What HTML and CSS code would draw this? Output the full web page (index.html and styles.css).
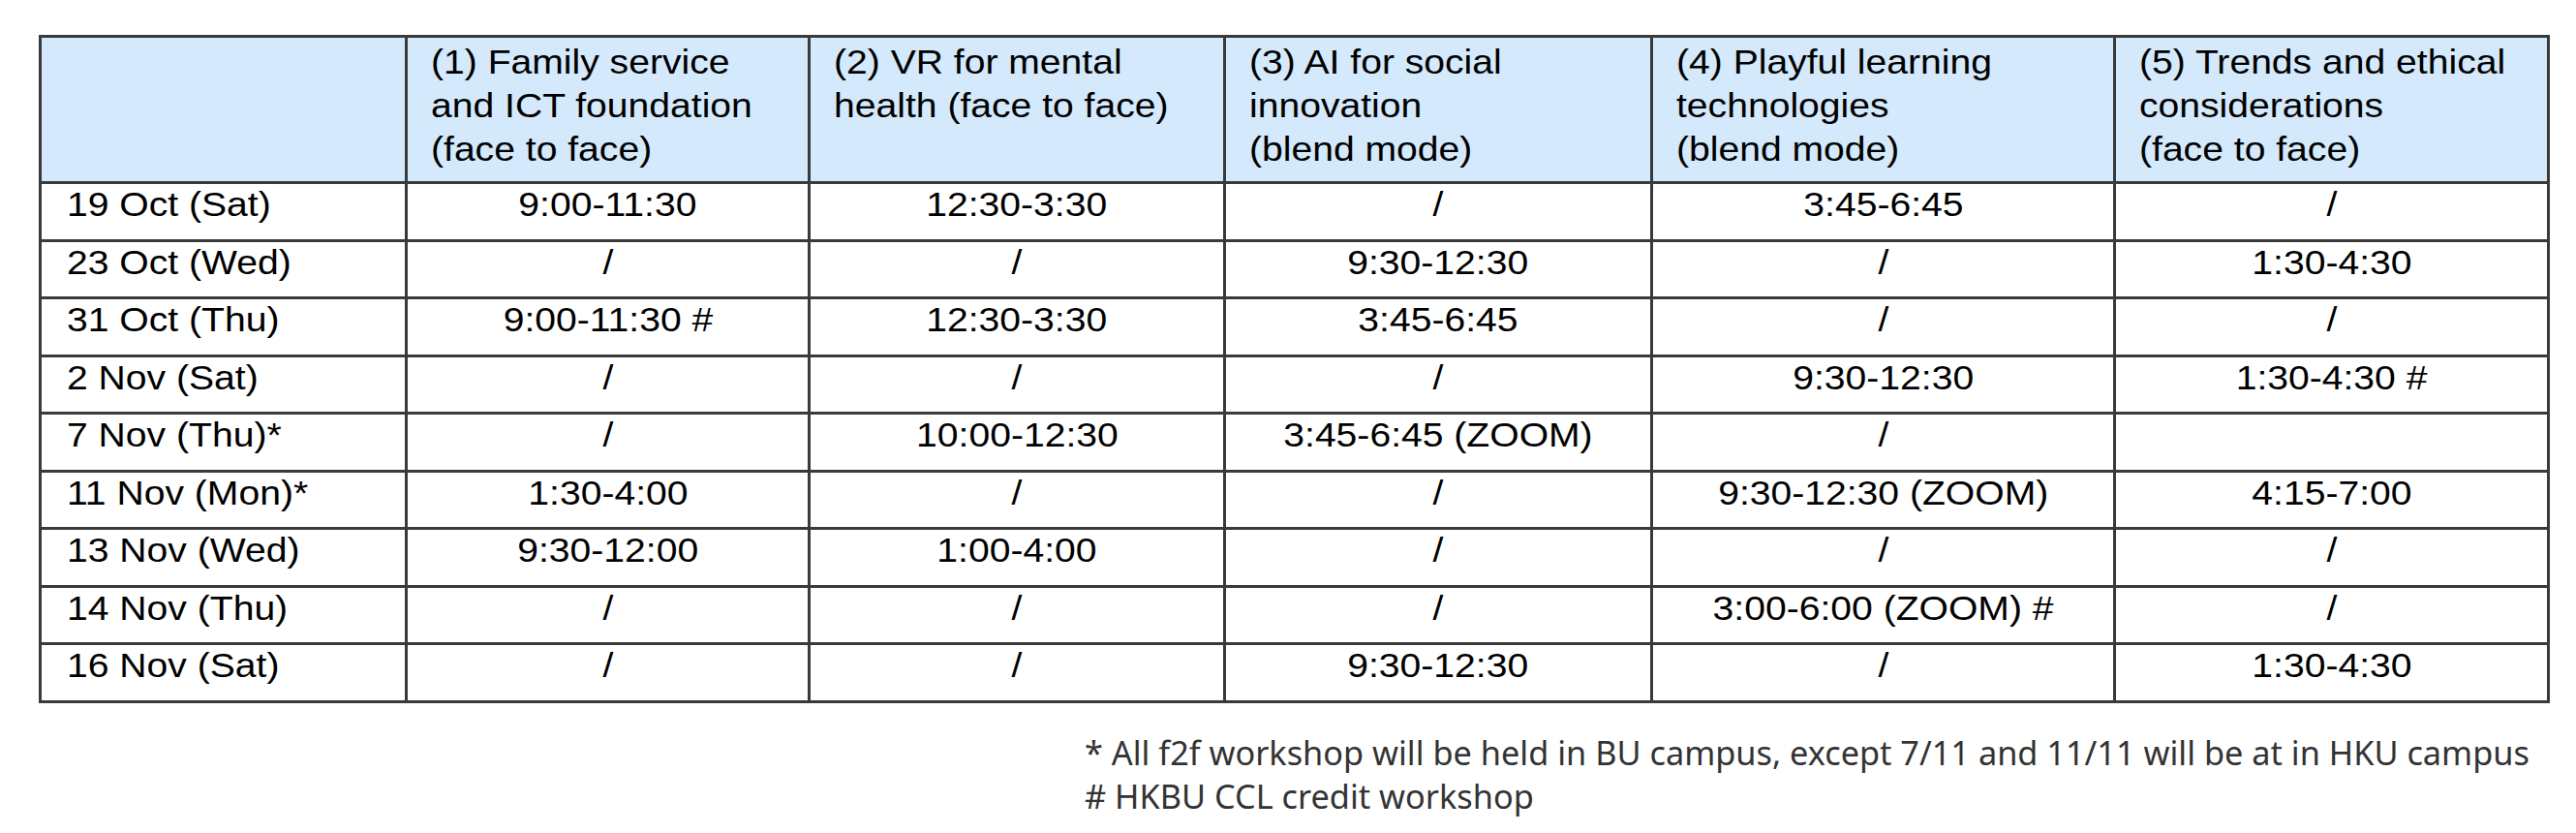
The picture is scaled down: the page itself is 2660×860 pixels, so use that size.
FILE: index.html
```html
<!DOCTYPE html>
<html lang="en">
<head>
<meta charset="utf-8">
<title>Workshop schedule</title>
<link rel="stylesheet" href="styles.css">
</head>
<body>
<main class="page">
  <div class="schedule" role="table">
    <div class="cell head"></div>
    <div class="cell head"><span class="sx">(1) Family service<br>and ICT foundation<br>(face to face)</span></div>
    <div class="cell head"><span class="sx">(2) VR for mental<br>health (face to face)</span></div>
    <div class="cell head"><span class="sx">(3) AI for social<br>innovation<br>(blend mode)</span></div>
    <div class="cell head"><span class="sx">(4) Playful learning<br>technologies<br>(blend mode)</span></div>
    <div class="cell head"><span class="sx">(5) Trends and ethical<br>considerations<br>(face to face)</span></div>

    <div class="cell date"><span class="sx">19 Oct (Sat)</span></div>
    <div class="cell time"><span class="sx">9:00-11:30</span></div>
    <div class="cell time"><span class="sx">12:30-3:30</span></div>
    <div class="cell time"><span class="sx">/</span></div>
    <div class="cell time"><span class="sx">3:45-6:45</span></div>
    <div class="cell time"><span class="sx">/</span></div>

    <div class="cell date"><span class="sx">23 Oct (Wed)</span></div>
    <div class="cell time"><span class="sx">/</span></div>
    <div class="cell time"><span class="sx">/</span></div>
    <div class="cell time"><span class="sx">9:30-12:30</span></div>
    <div class="cell time"><span class="sx">/</span></div>
    <div class="cell time"><span class="sx">1:30-4:30</span></div>

    <div class="cell date"><span class="sx">31 Oct (Thu)</span></div>
    <div class="cell time"><span class="sx">9:00-11:30 #</span></div>
    <div class="cell time"><span class="sx">12:30-3:30</span></div>
    <div class="cell time"><span class="sx">3:45-6:45</span></div>
    <div class="cell time"><span class="sx">/</span></div>
    <div class="cell time"><span class="sx">/</span></div>

    <div class="cell date"><span class="sx">2 Nov (Sat)</span></div>
    <div class="cell time"><span class="sx">/</span></div>
    <div class="cell time"><span class="sx">/</span></div>
    <div class="cell time"><span class="sx">/</span></div>
    <div class="cell time"><span class="sx">9:30-12:30</span></div>
    <div class="cell time"><span class="sx">1:30-4:30 #</span></div>

    <div class="cell date"><span class="sx">7 Nov (Thu)*</span></div>
    <div class="cell time"><span class="sx">/</span></div>
    <div class="cell time"><span class="sx">10:00-12:30</span></div>
    <div class="cell time"><span class="sx">3:45-6:45 (ZOOM)</span></div>
    <div class="cell time"><span class="sx">/</span></div>
    <div class="cell time"></div>

    <div class="cell date"><span class="sx">11 Nov (Mon)*</span></div>
    <div class="cell time"><span class="sx">1:30-4:00</span></div>
    <div class="cell time"><span class="sx">/</span></div>
    <div class="cell time"><span class="sx">/</span></div>
    <div class="cell time"><span class="sx">9:30-12:30 (ZOOM)</span></div>
    <div class="cell time"><span class="sx">4:15-7:00</span></div>

    <div class="cell date"><span class="sx">13 Nov (Wed)</span></div>
    <div class="cell time"><span class="sx">9:30-12:00</span></div>
    <div class="cell time"><span class="sx">1:00-4:00</span></div>
    <div class="cell time"><span class="sx">/</span></div>
    <div class="cell time"><span class="sx">/</span></div>
    <div class="cell time"><span class="sx">/</span></div>

    <div class="cell date"><span class="sx">14 Nov (Thu)</span></div>
    <div class="cell time"><span class="sx">/</span></div>
    <div class="cell time"><span class="sx">/</span></div>
    <div class="cell time"><span class="sx">/</span></div>
    <div class="cell time"><span class="sx">3:00-6:00 (ZOOM) #</span></div>
    <div class="cell time"><span class="sx">/</span></div>

    <div class="cell date"><span class="sx">16 Nov (Sat)</span></div>
    <div class="cell time"><span class="sx">/</span></div>
    <div class="cell time"><span class="sx">/</span></div>
    <div class="cell time"><span class="sx">9:30-12:30</span></div>
    <div class="cell time"><span class="sx">/</span></div>
    <div class="cell time"><span class="sx">1:30-4:30</span></div>
  </div>

  <div class="notes">
    <p>* All f2f workshop will be held in BU campus, except 7/11 and 11/11 will be at in HKU campus</p>
    <p># HKBU CCL credit workshop</p>
  </div>
</main>
</body>
</html>
```

FILE: styles.css
```css
html, body {
  margin: 0;
  padding: 0;
  background: #ffffff;
}

body {
  font-family: "Liberation Sans", Arial, sans-serif;
  color: #000000;
}

.page {
  padding: 36px 0 0 40px;
}

.schedule {
  display: grid;
  grid-template-columns: 375px 413px 426px 438px 475px 445px;
  grid-template-rows: 148px repeat(9, 56.5px);
  gap: 3px;
  padding: 3px;
  background: #3a3a3a;
  width: max-content;
}

.cell {
  background: #ffffff;
  font-size: 35px;
  white-space: nowrap;
  overflow: visible;
}

.head {
  background: #d4e9fb;
  padding: 2px 0 0 24px;
  line-height: 45px;
}

.date {
  padding: 1px 0 0 26px;
  line-height: 40px;
}

.time {
  text-align: center;
  padding-top: 1px;
  line-height: 40px;
}

.sx {
  display: inline-block;
  transform: scaleX(1.117);
  transform-origin: left top;
}

.time .sx {
  transform-origin: center top;
}

.notes {
  margin: 28px 0 0 1080px;
  font-family: "Noto Sans", "Open Sans", sans-serif;
  font-size: 34.3px;
  line-height: 45px;
  color: #333333;
}

.notes p {
  margin: 0;
  white-space: nowrap;
}
```
